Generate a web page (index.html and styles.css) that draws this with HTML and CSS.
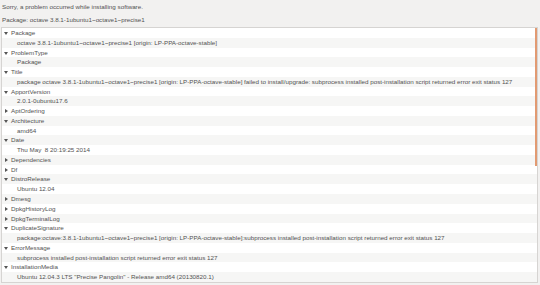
FILE: index.html
```html
<!DOCTYPE html>
<html>

<head>
    <meta charset="utf-8">
    <title>Apport</title>
    <link rel="stylesheet" href="styles.css">
</head>

<body>
    <div class="message">Sorry, a problem occurred while installing software.</div>
    <div class="package">Package: octave 3.8.1-1ubuntu1~octave1~precise1</div>

    <div class="tree">
        <div class="row open">Package</div>
        <div class="row value">octave 3.8.1-1ubuntu1~octave1~precise1 [origin: LP-PPA-octave-stable]</div>
        <div class="row open">ProblemType</div>
        <div class="row value">Package</div>
        <div class="row open">Title</div>
        <div class="row value">package octave 3.8.1-1ubuntu1~octave1~precise1 [origin: LP-PPA-octave-stable] failed to install/upgrade: subprocess installed post-installation script returned error exit status 127</div>
        <div class="row open">ApportVersion</div>
        <div class="row value">2.0.1-0ubuntu17.6</div>
        <div class="row closed">AptOrdering</div>
        <div class="row open">Architecture</div>
        <div class="row value">amd64</div>
        <div class="row open">Date</div>
        <div class="row value">Thu May  8 20:19:25 2014</div>
        <div class="row closed">Dependencies</div>
        <div class="row closed">Df</div>
        <div class="row open">DistroRelease</div>
        <div class="row value">Ubuntu 12.04</div>
        <div class="row closed">Dmesg</div>
        <div class="row closed">DpkgHistoryLog</div>
        <div class="row closed">DpkgTerminalLog</div>
        <div class="row open">DuplicateSignature</div>
        <div class="row value">package:octave:3.8.1-1ubuntu1~octave1~precise1 [origin: LP-PPA-octave-stable]:subprocess installed post-installation script returned error exit status 127</div>
        <div class="row open">ErrorMessage</div>
        <div class="row value">subprocess installed post-installation script returned error exit status 127</div>
        <div class="row open">InstallationMedia</div>
        <div class="row value">Ubuntu 12.04.3 LTS "Precise Pangolin" - Release amd64 (20130820.1)</div>
        <div class="scrollbar"></div>
    </div>
</body>

</html>
```

FILE: styles.css
```css
body {
    background-color: #f2f1f0;
    font-family: 'Liberation Sans', Arial, sans-serif;
    font-size: 6.25px;
    color: #525252;
    margin: 0;
}

.message {
    padding: 2px 2px 0 2px;
    height: 9px;
    line-height: 9px;
}

.package {
    padding: 4px 2px 0 2px;
    height: 11px;
    line-height: 9px;
}

.tree {
    position: relative;
    margin: 1px 2px 0 1px;
    background-color: #ffffff;
    border: 1px solid #d6d4d2;
    height: 254px;
    overflow: hidden;
}

.row {
    height: 9.77px;
    line-height: 9.77px;
    white-space: pre;
    padding-left: 9px;
    position: relative;
}

.row:nth-child(even) {
    background-color: #f6f6f5;
}

.row.value {
    padding-left: 15px;
}

.row.open::before,
.row.closed::before {
    content: "";
    position: absolute;
    width: 0;
    height: 0;
}

.row.open::before {
    top: 4px;
    left: 2px;
    border-left: 2px solid transparent;
    border-right: 2px solid transparent;
    border-top: 3px solid #555555;
}

.row.closed::before {
    top: 3px;
    left: 3px;
    border-top: 2px solid transparent;
    border-bottom: 2px solid transparent;
    border-left: 3px solid #555555;
}

.scrollbar {
    position: absolute;
    top: 0;
    right: 0;
    width: 2px;
    height: 138px;
    background-color: #e29a72;
}
```
